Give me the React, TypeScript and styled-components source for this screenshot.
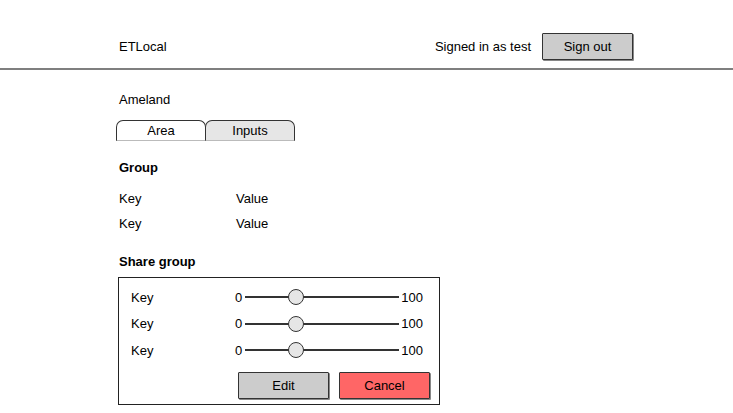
import React from "react";
import styled, { createGlobalStyle } from "styled-components";

const Global = createGlobalStyle`
  html, body { margin: 0; padding: 0; background: #fff; }
  body { font-family: "Liberation Sans", Arial, sans-serif; font-size: 13px; color: #000; }
  * { box-sizing: border-box; }
`;

const Header = styled.header`
  height: 70px;
  padding: 33px 100px 0 119px;
  display: flex;
  align-items: flex-start;
  border-bottom: 2px solid #7f7f7f;
`;

const Brand = styled.div`
  line-height: 27px;
  flex: 1;
`;

const UserText = styled.div`
  line-height: 27px;
  margin-right: 11px;
`;

const SketchButton = styled.button<{ $tone?: "gray" | "red" }>`
  width: 91px;
  height: 27px;
  padding: 0;
  font: inherit;
  font-size: 13px;
  color: #000;
  background: ${(p) => (p.$tone === "red" ? "#ff6666" : "#cccccc")};
  border: 1px solid #333;
  border-radius: 1px;
  box-shadow: 1px 1px 0 #888;
  cursor: pointer;
`;

const Main = styled.main`
  padding: 22px 0 0 119px;
`;

const Title = styled.div`
  line-height: 16px;
  height: 16px;
`;

const Tabs = styled.div`
  display: flex;
  margin: 12px 0 0 -3px;
`;

const Tab = styled.div<{ $active?: boolean }>`
  width: 90px;
  height: 21px;
  margin-right: -1px;
  display: flex;
  align-items: center;
  justify-content: center;
  background: ${(p) => (p.$active ? "#fff" : "#e6e6e6")};
  border: 1px solid #333;
  border-bottom: 1px solid #bbb;
  border-radius: 7px 7px 0 0;
`;

const SectionTitle = styled.div<{ $top: number }>`
  font-weight: bold;
  line-height: 16px;
  margin-top: ${(p) => p.$top}px;
`;

const KeyValueList = styled.div`
  margin-top: 15px;
  display: flex;
  flex-direction: column;
  gap: 9px;
`;

const KeyValueRow = styled.div`
  display: grid;
  grid-template-columns: 117px auto;
  line-height: 16px;
`;

const ShareBox = styled.div`
  margin: 7px 0 0 -1px;
  width: 322px;
  height: 128px;
  border: 1px solid #222;
  padding: 6px 0 5px 12px;
  display: flex;
  flex-direction: column;
`;

const SliderRow = styled.div`
  display: grid;
  grid-template-columns: 104px auto;
  align-items: center;
  height: 26.5px;
`;

const Slider = styled.div`
  display: flex;
  align-items: center;
`;

const SliderTrack = styled.div`
  position: relative;
  width: 154px;
  height: 2px;
  background: #333;
  margin: 0 2px 0 3px;
`;

const Knob = styled.div`
  position: absolute;
  left: 43px;
  top: -7px;
  width: 16px;
  height: 16px;
  border-radius: 50%;
  background: #e6e6e6;
  border: 1px solid #333;
`;

const ButtonRow = styled.div`
  display: flex;
  gap: 10px;
  margin: 8px 0 0 107px;
`;

const rows = [0, 1, 2];

export default function App() {
  return (
    <>
      <Global />
      <Header>
        <Brand>ETLocal</Brand>
        <UserText>Signed in as test</UserText>
        <SketchButton>Sign out</SketchButton>
      </Header>
      <Main>
        <Title>Ameland</Title>
        <Tabs>
          <Tab $active>Area</Tab>
          <Tab>Inputs</Tab>
        </Tabs>
        <SectionTitle $top={19}>Group</SectionTitle>
        <KeyValueList>
          <KeyValueRow>
            <span>Key</span>
            <span>Value</span>
          </KeyValueRow>
          <KeyValueRow>
            <span>Key</span>
            <span>Value</span>
          </KeyValueRow>
        </KeyValueList>
        <SectionTitle $top={22}>Share group</SectionTitle>
        <ShareBox>
          {rows.map((i) => (
            <SliderRow key={i}>
              <span>Key</span>
              <Slider>
                <span>0</span>
                <SliderTrack>
                  <Knob />
                </SliderTrack>
                <span>100</span>
              </Slider>
            </SliderRow>
          ))}
          <ButtonRow>
            <SketchButton>Edit</SketchButton>
            <SketchButton $tone="red">Cancel</SketchButton>
          </ButtonRow>
        </ShareBox>
      </Main>
    </>
  );
}
